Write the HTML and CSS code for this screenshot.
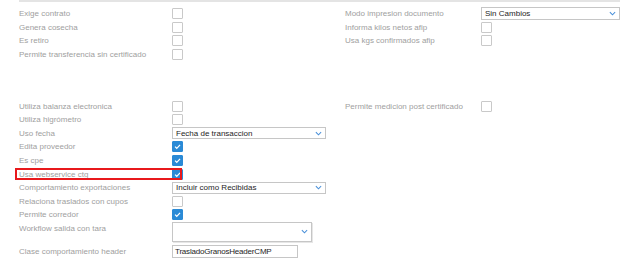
FILE: index.html
```html
<!DOCTYPE html>
<html lang="es">
<head>
    <meta charset="UTF-8">
    <title>Configuracion</title>
    <link rel="stylesheet" href="styles.css">
</head>
<body>
    <div class="panel">
        <div class="group group-top">
            <div class="col col-left">
                <div class="row"><span class="label">Exige contrato</span><span class="check"></span></div>
                <div class="row"><span class="label">Genera cosecha</span><span class="check"></span></div>
                <div class="row"><span class="label">Es retiro</span><span class="check"></span></div>
                <div class="row"><span class="label">Permite transferencia sin certificado</span><span class="check"></span></div>
            </div>
            <div class="col col-right">
                <div class="row">
                    <span class="label">Modo impresion documento</span>
                    <div class="select select-wide"><span>Sin Cambios</span><svg class="chev" viewBox="0 0 8 5"><path d="M1 1l3 3 3-3" /></svg></div>
                </div>
                <div class="row"><span class="label">Informa kilos netos afip</span><span class="check"></span></div>
                <div class="row"><span class="label">Usa kgs confirmados afip</span><span class="check"></span></div>
            </div>
        </div>

        <div class="group group-bottom">
            <div class="col col-left">
                <div class="row"><span class="label">Utiliza balanza electronica</span><span class="check"></span></div>
                <div class="row"><span class="label">Utiliza higrómetro</span><span class="check"></span></div>
                <div class="row">
                    <span class="label">Uso fecha</span>
                    <div class="select"><span>Fecha de transaccion</span><svg class="chev" viewBox="0 0 8 5"><path d="M1 1l3 3 3-3" /></svg></div>
                </div>
                <div class="row"><span class="label">Edita proveedor</span><span class="check checked"><svg viewBox="0 0 11 11"><path d="M2.5 5.6l2.1 2.1 4-4.2" /></svg></span></div>
                <div class="row"><span class="label">Es cpe</span><span class="check checked"><svg viewBox="0 0 11 11"><path d="M2.5 5.6l2.1 2.1 4-4.2" /></svg></span></div>
                <div class="row highlight"><span class="label">Usa webservice ctg</span><span class="check checked"><svg viewBox="0 0 11 11"><path d="M2.5 5.6l2.1 2.1 4-4.2" /></svg></span></div>
                <div class="row">
                    <span class="label">Comportamiento exportaciones</span>
                    <div class="select"><span>Incluir como Recibidas</span><svg class="chev" viewBox="0 0 8 5"><path d="M1 1l3 3 3-3" /></svg></div>
                </div>
                <div class="row"><span class="label">Relaciona traslados con cupos</span><span class="check"></span></div>
                <div class="row"><span class="label">Permite corredor</span><span class="check checked"><svg viewBox="0 0 11 11"><path d="M2.5 5.6l2.1 2.1 4-4.2" /></svg></span></div>
                <div class="row row-tall">
                    <span class="label">Workflow salida con tara</span>
                    <div class="select select-tall"><span></span><svg class="chev" viewBox="0 0 8 5"><path d="M1 1l3 3 3-3" /></svg></div>
                </div>
                <div class="row row-input">
                    <span class="label">Clase comportamiento header</span>
                    <div class="text-input">TrasladoGranosHeaderCMP</div>
                </div>
            </div>
            <div class="col col-right">
                <div class="row"><span class="label">Permite medicion post certificado</span><span class="check"></span></div>
            </div>
        </div>
    </div>
</body>
</html>
```

FILE: styles.css
```css
body {
    margin: 0;
    background: #fff;
    font-family: 'Liberation Sans', Arial, sans-serif;
    font-size: 8px;
    color: #999;
}
.panel {
    margin-left: 19px;
    width: 601px;
    border-top: 2px solid #e4e4e4;
}
.group {
    display: flex;
}
.group-top {
    padding-top: 4.7px;
}
.group-bottom {
    margin-top: 38.2px;
}
.col-left {
    width: 326px;
}
.col-right {
    flex: 1;
}
.row {
    display: flex;
    align-items: center;
    height: 13.6px;
    position: relative;
}
.col-left .label {
    width: 153px;
}
.col-right .label {
    width: 136px;
}
.label {
    white-space: nowrap;
    color: #a0a0a0;
}
.check {
    width: 9px;
    height: 9px;
    border: 1px solid #c9c9c9;
    border-radius: 1px;
    background: #fff;
    display: block;
}
.check.checked {
    background: #2a8ad6;
    border-color: #2a8ad6;
}
.check svg {
    display: block;
    width: 9px;
    height: 9px;
}
.check svg path {
    fill: none;
    stroke: #fff;
    stroke-width: 1.5;
}
.select {
    box-sizing: border-box;
    width: 154px;
    height: 12px;
    border: 1px solid #c6c6c6;
    background: #fff;
    display: flex;
    align-items: center;
    justify-content: space-between;
    padding: 0 3px 0 3px;
    color: #1e1e1e;
}
.select-wide {
    width: 139px;
    height: 13px;
}
.select-tall {
    width: 140px;
    height: 20px;
    box-shadow: 1px 1px 0 #e6e6e6;
}
.chev {
    width: 7px;
    height: 5px;
}
.chev path {
    fill: none;
    stroke: #4a90d9;
    stroke-width: 1.2;
}
.row-tall {
    height: 22.6px;
    align-items: flex-start;
}
.row-tall .label {
    line-height: 13.6px;
}
.row-input {
    height: 14.5px;
}
.text-input {
    box-sizing: border-box;
    width: 126px;
    height: 13px;
    border: 1px solid #c6c6c6;
    padding: 0 2px;
    line-height: 11px;
    color: #1e1e1e;
    letter-spacing: -0.2px;
}
.highlight::after {
    content: '';
    position: absolute;
    left: -4px;
    right: 163px;
    top: 0.5px;
    bottom: 1px;
    border: 2px solid #e8191c;
}
```
